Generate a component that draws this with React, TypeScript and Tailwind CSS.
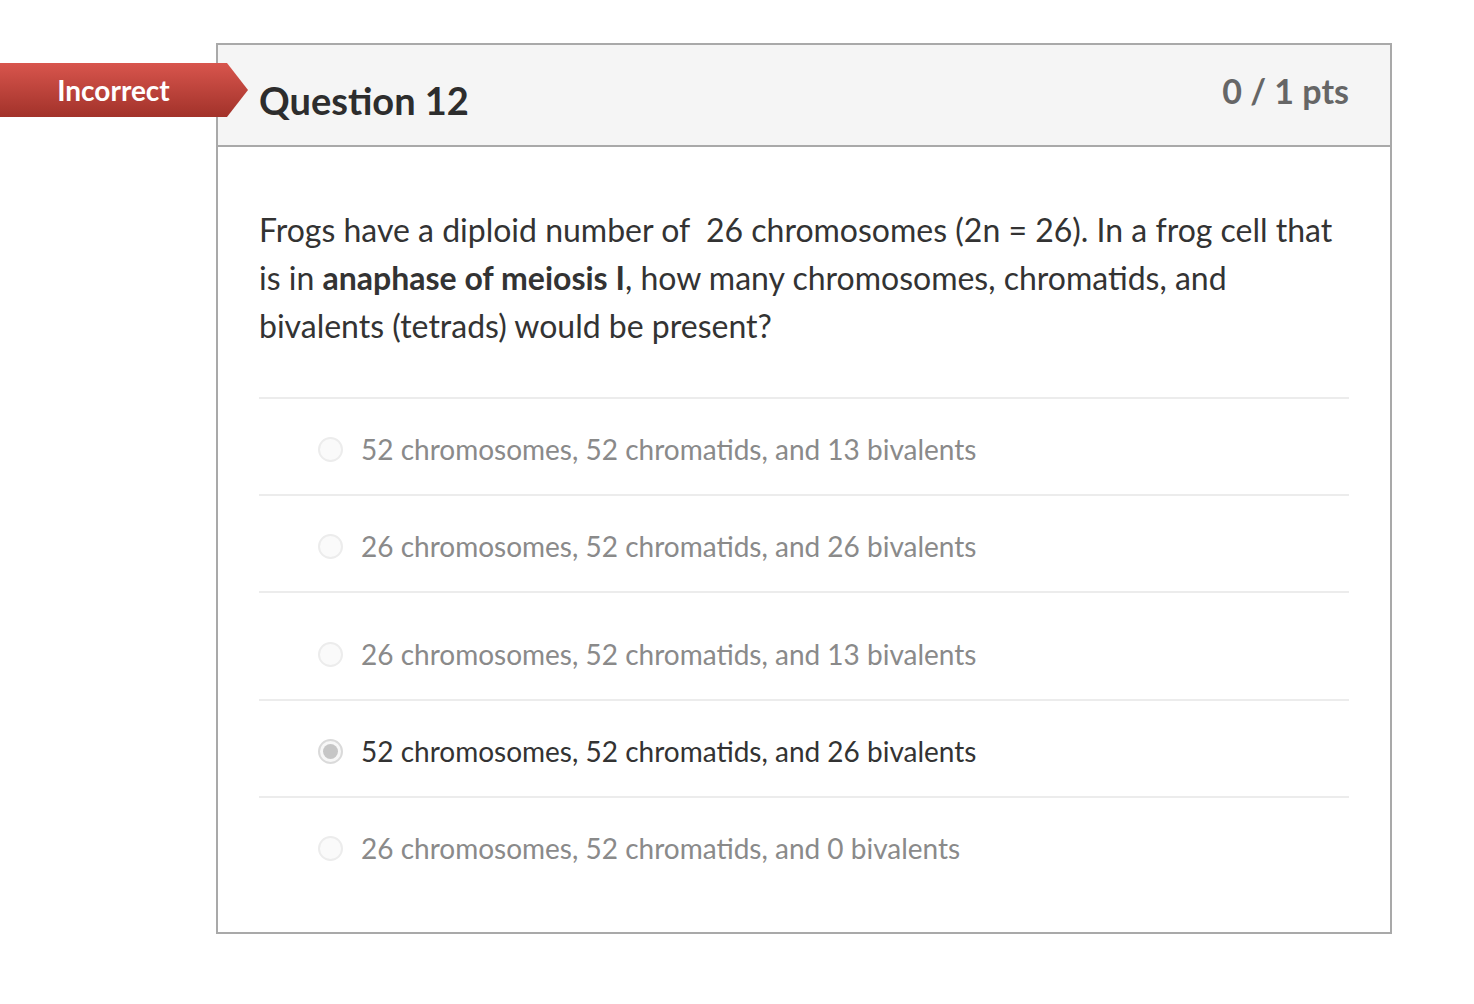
const answers = [
  { text: "52 chromosomes, 52 chromatids, and 13 bivalents", selected: false, tall: false },
  { text: "26 chromosomes, 52 chromatids, and 26 bivalents", selected: false, tall: false },
  { text: "26 chromosomes, 52 chromatids, and 13 bivalents", selected: false, tall: true },
  { text: "52 chromosomes, 52 chromatids, and 26 bivalents", selected: true, tall: false },
  { text: "26 chromosomes, 52 chromatids, and 0 bivalents", selected: false, tall: false },
]

function Radio({ checked }: { checked: boolean }) {
  if (checked) {
    return (
      <span className="flex h-[25px] w-[25px] shrink-0 items-center justify-center rounded-full border-2 border-[#dadada] bg-[#f7f7f7]">
        <span className="h-[15px] w-[15px] rounded-full bg-[#c6c6c6]" />
      </span>
    )
  }
  return <span className="h-[25px] w-[25px] shrink-0 rounded-full border-2 border-[#ececec] bg-[#fafafa]" />
}

export default function App() {
  return (
    <div className="relative min-h-screen bg-white pl-[216px] pt-[43px] font-['Lato',sans-serif] text-[#333]">
      <div className="absolute left-0 top-[63px] flex h-[54px] w-[248px] items-center bg-gradient-to-b from-[#d8554d] to-[#a2322a] [clip-path:polygon(0_0,227px_0,248px_50%,227px_100%,0_100%)]">
        <span className="w-[227px] text-center text-[28px] font-bold leading-none text-white">Incorrect</span>
      </div>

      <div className="h-[891px] w-[1176px] border-2 border-[#a9a9a9]">
        <div className="flex h-[102px] items-start justify-between border-b-2 border-[#a9a9a9] bg-[#f5f5f5] px-[41px]">
          <h2 className="mt-[33px] text-[38px] font-bold leading-[44px] text-[#2d2d2d]">Question 12</h2>
          <div className="mt-[26px] text-[34px] font-bold leading-[40px] text-[#666]">0 / 1 pts</div>
        </div>

        <div className="px-[41px] pt-[59px]">
          <p className="text-[32px] leading-[48px] text-[#333]">
            Frogs have a diploid number of&nbsp; 26 chromosomes (2n = 26). In a frog cell that is in{" "}
            <strong className="font-bold">anaphase of meiosis I</strong>, how many chromosomes, chromatids, and
            bivalents (tetrads) would be present?
          </p>

          <div className="mt-[47px]">
            {answers.map((a) => (
              <div
                key={a.text}
                className={`flex items-center gap-[18px] border-t-2 border-[#ececec] pl-[59px] ${
                  a.tall ? "h-[108px] pt-[16px]" : "h-[97px] pt-[5px]"
                }`}
              >
                <Radio checked={a.selected} />
                <span className={`text-[28px] leading-[36px] ${a.selected ? "text-[#333]" : "text-[#8a8a8a]"}`}>
                  {a.text}
                </span>
              </div>
            ))}
          </div>
        </div>
      </div>
    </div>
  )
}
